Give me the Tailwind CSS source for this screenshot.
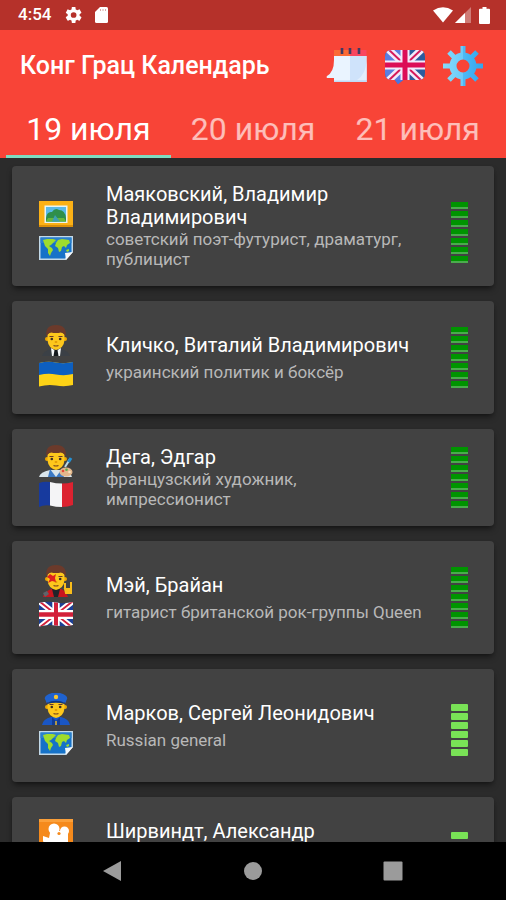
<!DOCTYPE html>
<html lang="ru">
<head>
<meta charset="utf-8">
<meta name="viewport" content="width=device-width, initial-scale=1">
<title>Конг Грац Календарь</title>
<script src="https://cdn.jsdelivr.net/npm/@tailwindcss/browser@4"></script>
</head>
<body class="flex h-screen flex-col overflow-hidden bg-[#303030] font-['Roboto','Noto_Sans',sans-serif] text-white">

<!-- Shared drawings -->
<svg class="hidden" aria-hidden="true">
  <symbol id="map" viewBox="0 0 36 33">
    <path d="M1 5H35V21L28 29H1Z" fill="#c3d9e8"/>
    <path d="M2.500 6.500H33.500V20.500L27 27.500H2.500Z" fill="#1672c8"/>
    <path d="M2.500 6.500H33.500V12H2.500Z" fill="#2a80cc"/>
    <path d="M5 9l4-1 6 0 3 1-3 3-2 2-2 1 3 2 1 2-2 3-1 3-2-3 0-4-3-3-1-3zM18 12l2-3 4-1 7 1 1 3-3 2-1 3-2-2-2 1-1 4-2 1-1-4-3-2zM28 19l3-1 0 2-2 1z" fill="#9fdc2c"/>
    <path d="M28 29L27 22L35 21Z" fill="#f2f7fa"/>
  </symbol>
  <symbol id="uk" viewBox="0 0 60 40" preserveAspectRatio="none">
    <path d="M0 0H60V40H0Z" fill="#1d3f95"/>
    <path d="M0 0L60 40M60 0L0 40" stroke="#fff" stroke-width="9"/>
    <path d="M0 0L30 20M60 40L30 20M60 0L30 20M0 40L30 20" stroke="#d3203a" stroke-width="3"/>
    <path d="M30 0V40M0 20H60" stroke="#fff" stroke-width="13"/>
    <path d="M30 0V40M0 20H60" stroke="#d3203a" stroke-width="7"/>
  </symbol>
  <symbol id="head" viewBox="0 0 36 33">
    <circle cx="9" cy="14" r="2" fill="#eda600"/><circle cx="27" cy="14" r="2" fill="#eda600"/>
    <path d="M9.500 9Q18 3 26.500 9V15Q26 23 18 25Q10 23 9.500 15Z" fill="#fdc71c"/>
    <path d="M8.500 12Q6.500 0 18 0Q29.500 0 27.500 12Q26.500 8 23 7.500Q18 8.500 13 7.500Q9.500 8 8.500 12Z" fill="#6b3a2b"/>
    <path d="M11.500 11.500h4M20.500 11.500h4" stroke="#6b3a2b" stroke-width="1.200"/>
    <circle cx="13.800" cy="14" r="1.300" fill="#3c2b24"/><circle cx="22.200" cy="14" r="1.300" fill="#3c2b24"/>
    <path d="M16.800 17h2.400" stroke="#d98e00" stroke-width="1.400"/>
    <path d="M15.500 20.500Q18 21.500 20.500 20.500" stroke="#7a4a20" stroke-width="1.200" fill="none"/>
  </symbol>
</svg>

<header class="shrink-0 bg-[#f84437]">
  <div class="flex h-[30px] items-center bg-[#b5312a] pr-4 pl-[18px]">
    <span class="text-[17px] font-medium">4:54</span>
    <svg class="ml-[14px] size-[18px]" viewBox="0 0 24 24" fill="#fff" aria-hidden="true"><path fill-rule="evenodd" d="M19.400 13c.1-.3.1-.6.1-1s0-.7-.1-1l2.300-1.800c.2-.2.300-.5.100-.7l-2.200-3.800c-.1-.2-.4-.3-.7-.2l-2.700 1.100c-.6-.4-1.200-.8-1.900-1L13.900 1.700c0-.2-.3-.4-.5-.4H9.600c-.3 0-.5.2-.5.4l-.4 2.900c-.7.300-1.300.600-1.900 1L4.100 4.500c-.2-.1-.5 0-.7.200L1.200 8.500c-.1.200-.1.500.1.700L3.600 11a8 8 0 0 0 0 2l-2.300 1.800c-.2.200-.3.500-.1.700l2.200 3.800c.1.200.4.300.7.200l2.700-1.100c.6.400 1.200.800 1.900 1l.4 2.900c0 .2.200.4.500.4h3.800c.2 0 .5-.2.500-.4l.4-2.900c.7-.3 1.300-.6 1.900-1l2.700 1.100c.2.100.5 0 .7-.2l2.200-3.800c.1-.2.1-.5-.1-.7zM11.500 15.800a3.800 3.800 0 1 1 0-7.600 3.800 3.800 0 0 1 0 7.600z"/></svg>
    <svg class="ml-3 h-4 w-[13px]" viewBox="0 0 13 16" aria-hidden="true"><path d="M5 0H11.500Q13 0 13 1.500V14.500Q13 16 11.500 16H1.500Q0 16 0 14.500V5Z" fill="#fff"/><path d="M5.500 2v2M8 2v2M10.500 2v2" stroke="#d8a8a5" stroke-width="1"/></svg>
    <div class="ml-auto flex items-center">
      <svg class="h-4 w-5" viewBox="0 0 20 16" aria-hidden="true"><path d="M0 3.500Q10-3 20 3.500L10 15.500Z" fill="#fff"/></svg>
      <svg class="ml-[2px] size-4" viewBox="0 0 16 16" aria-hidden="true"><path d="M16 0V16H0Z" fill="#cf7b76"/><path d="M10 6V16H0Z" fill="#fff"/></svg>
      <svg class="ml-2 h-[17px] w-[11px]" viewBox="0 0 11 17" aria-hidden="true"><path d="M3.500 0h4v1.800H10q1 0 1 1V16q0 1-1 1H1q-1 0-1-1V2.800q0-1 1-1H3.500Z" fill="#fff"/></svg>
    </div>
  </div>

  <div class="flex h-[72px] items-center gap-4 pr-[22px] pl-5">
    <h1 class="mr-auto text-[25px] font-medium whitespace-nowrap">Конг Грац Календарь</h1>
    <button type="button" aria-label="Календарь" class="shrink-0">
      <svg class="size-[42px]" viewBox="0 0 42 42" aria-hidden="true">
        <path d="M8 5H40.500V13H8Z" fill="#f9455f"/><path d="M8 5H24V13H8Z" fill="#fb6a35"/>
        <path d="M8 11H40.500V37H8V33H1Q0 32 1 31Q8 27 8 15Z" fill="#eaf4ff"/>
        <path d="M24 11H40.500V37H24Z" fill="#cfe3fb"/><path d="M40.500 16V35H31Q40 29 40.500 16Z" fill="#e2eefc"/>
        <path d="M8 35.500H40.500V37H8Z" fill="#c0daf5"/>
        <path d="M16 3V9M24 3V9M33 3V9" stroke="#413a63" stroke-width="2.600"/>
      </svg>
    </button>
    <button type="button" aria-label="English" class="shrink-0">
      <svg class="size-[42px]" viewBox="0 0 42 42" aria-hidden="true">
        <clipPath id="bubble"><path d="M8 5H35Q41 5 41 12V28Q41 35 35 35H19L14 39L11 35H8Q1 35 1 28V12Q1 5 8 5Z"/></clipPath>
        <g clip-path="url(#bubble)">
          <path d="M0 0H42V42H0Z" fill="#2c5c9e"/><path d="M0 0H21V42H0Z" fill="#5a7ee0"/>
          <path d="M3 3L39 37M39 3L3 37" stroke="#f3eafa" stroke-width="7"/>
          <path d="M3 3L21 20L39 37M39 3L21 20L3 37" stroke="#d51b5b" stroke-width="2"/>
          <path d="M21 5V35M0 20H42" stroke="#f3eafa" stroke-width="9"/>
          <path d="M21 5V35M0 20H42" stroke="#dc0d56" stroke-width="5"/>
          <path d="M10 35H20V42H10Z" fill="#4a74e0"/>
        </g>
      </svg>
    </button>
    <button type="button" aria-label="Настройки" class="shrink-0">
      <svg class="size-[42px]" viewBox="-21 -21 42 42" aria-hidden="true">
        <defs>
          <linearGradient id="steel" gradientUnits="userSpaceOnUse" x1="-20" x2="20" y1="0" y2="0"><stop offset="0" stop-color="#86dcfb"/><stop offset=".5" stop-color="#6bcaf9"/><stop offset=".5" stop-color="#4fbaf5"/><stop offset="1" stop-color="#2fa5ee"/></linearGradient>
        </defs>
        <g fill="none" stroke="url(#steel)">
          <circle r="10" stroke-width="7"/>
          <path stroke-width="5" d="M.01-12L0-20M.01 12L0 20M-12 .01L-20 0M12 .01L20 0M8-8L14-14M-8-8L-14-14M8 8L14 14M-8 8L-14 14"/>
        </g>
      </svg>
    </button>
  </div>

  <div role="tablist" class="flex h-14 px-[6px] text-[32px] leading-none">
    <button type="button" role="tab" aria-selected="true" class="flex-1 border-b-[3px] border-[#7edcc0] whitespace-nowrap">19 июля</button>
    <button type="button" role="tab" aria-selected="false" class="flex-1 border-b-[3px] border-transparent whitespace-nowrap text-white/65">20 июля</button>
    <button type="button" role="tab" aria-selected="false" class="flex-1 border-b-[3px] border-transparent whitespace-nowrap text-white/65">21 июля</button>
  </div>
</header>

<main class="min-h-0 flex-1 overflow-y-auto bg-[#2b2b2b] px-3 pt-2 [scrollbar-width:none]">
  <ul class="flex flex-col gap-[15px]">
    <li class="flex items-center rounded-[4px] bg-[#424242] py-[17px] pr-[26px] pl-[26px] shadow-md shadow-black/40">
      <div class="flex w-9 shrink-0 flex-col pt-[10px]">
        <svg class="h-[33px] w-9" viewBox="0 0 36 33" role="img" aria-label="Картина"><path d="M1 3H35V29H1Z" fill="#fbb116"/><path d="M1 27H35V29H1Z" fill="#d98f0a"/><path d="M6.500 7.500H29.500V25H6.500Z" fill="#e8f4f4"/><path d="M8 9H28V23.500H8Z" fill="#59b9e8"/><path d="M8 20Q9 13 14 14Q17 9 21 12Q27 12 28 20V23.500H8Z" fill="#2f8f4a"/><path d="M10 20h16l2 3.500H8z" fill="#68b83a"/><path d="M17 17l5 6.500h-8z" fill="#3fa0b0"/></svg>
        <svg class="h-[33px] w-9" role="img" aria-label="Карта мира"><use href="#map"/></svg>
      </div>
      <div class="min-w-0 flex-1 pr-4 pl-8">
        <h2 class="text-[20px] leading-[23px]">Маяковский, Владимир Владимирович</h2>
        <p class="text-[17px] leading-5 text-[#b8b8b8]">советский поэт-футурист, драматург, публицист</p>
      </div>
      <div class="flex w-[17px] shrink-0 flex-col gap-[2px] pt-3" role="img" aria-label="Популярность 7">
        <i class="h-[7px] border-b-2 border-[#4bab4d] bg-[#009400]"></i><i class="h-[7px] border-b-2 border-[#4bab4d] bg-[#009400]"></i><i class="h-[7px] border-b-2 border-[#4bab4d] bg-[#009400]"></i><i class="h-[7px] border-b-2 border-[#4bab4d] bg-[#009400]"></i><i class="h-[7px] border-b-2 border-[#4bab4d] bg-[#009400]"></i><i class="h-[7px] border-b-2 border-[#4bab4d] bg-[#009400]"></i><i class="h-[7px] border-b-2 border-[#4bab4d] bg-[#009400]"></i>
      </div>
    </li>

    <li class="flex min-h-[113px] items-center rounded-[4px] bg-[#424242] pr-[26px] pl-[26px] shadow-md shadow-black/40">
      <div class="flex w-9 shrink-0 flex-col">
        <svg class="h-[33px] w-9" viewBox="0 0 36 33" role="img" aria-label="Политик"><path d="M4 31Q5 26 13 24H23Q31 26 32 31Z" fill="#3b4046"/><path d="M13 23L18 26L23 23L22 31H14Z" fill="#f5f7f8"/><path d="M16.500 25h3l1 6h-5z" fill="#15191d"/><use href="#head" width="36" height="33"/></svg>
        <svg class="h-[33px] w-9" viewBox="0 0 36 33" role="img" aria-label="Украина"><path d="M1 5Q10 3 18 4.500Q27 6 35 4V27Q27 29 18 27.500Q10 26 1 28.500Z" fill="#fdd216"/><path d="M1 5Q10 3 18 4.500Q27 6 35 4V16Q27 18 18 16.500Q10 15 1 17Z" fill="#0d5fc0"/></svg>
      </div>
      <div class="flex min-w-0 flex-1 flex-col gap-[5px] pr-4 pl-8">
        <h2 class="text-[20px] leading-[23px]">Кличко, Виталий Владимирович</h2>
        <p class="text-[17px] leading-5 text-[#b8b8b8]">украинский политик и боксёр</p>
      </div>
      <div class="flex w-[17px] shrink-0 flex-col gap-[2px]" role="img" aria-label="Популярность 7">
        <i class="h-[7px] border-b-2 border-[#4bab4d] bg-[#009400]"></i><i class="h-[7px] border-b-2 border-[#4bab4d] bg-[#009400]"></i><i class="h-[7px] border-b-2 border-[#4bab4d] bg-[#009400]"></i><i class="h-[7px] border-b-2 border-[#4bab4d] bg-[#009400]"></i><i class="h-[7px] border-b-2 border-[#4bab4d] bg-[#009400]"></i><i class="h-[7px] border-b-2 border-[#4bab4d] bg-[#009400]"></i><i class="h-[7px] border-b-2 border-[#4bab4d] bg-[#009400]"></i>
      </div>
    </li>

    <li class="flex min-h-[97px] items-center rounded-[4px] bg-[#424242] pr-[26px] pl-[26px] shadow-md shadow-black/40">
      <div class="flex w-9 shrink-0 flex-col">
        <svg class="h-[33px] w-9" viewBox="0 0 36 33" role="img" aria-label="Художник"><path d="M1 32Q2 27 12 25H24Q33 27 34 32Z" fill="#d9e4ea"/><path d="M12 24L18 32H10Z" fill="#3b79c4"/><path d="M24 24L18 32H26Z" fill="#3b79c4"/><use href="#head" width="36" height="33"/><path d="M27 22L32 14" stroke="#b9d9e8" stroke-width="2"/><path d="M30.500 17L33 13" stroke="#2492d6" stroke-width="3"/><ellipse cx="28" cy="27" rx="6.500" ry="4.500" fill="#e3b78c"/><circle cx="25" cy="26" r="1.300" fill="#e34b3a"/><circle cx="28.500" cy="24.800" r="1.300" fill="#5cab4d"/><circle cx="31.500" cy="27" r="1.300" fill="#f4e4c0"/></svg>
        <svg class="h-[33px] w-9" viewBox="0 0 36 33" role="img" aria-label="Франция"><path d="M1 5Q6 3 12 4V27.500Q6 26.500 1 29Z" fill="#173a9e"/><path d="M12 4Q18 5.500 24 5.500V29Q18 29 12 27.500Z" fill="#f4f4f6"/><path d="M24 5.500Q30 5.500 35 4V27Q30 29 24 29Z" fill="#dc2230"/></svg>
      </div>
      <div class="min-w-0 flex-1 pr-24 pl-8">
        <h2 class="text-[20px] leading-[23px]">Дега, Эдгар</h2>
        <p class="text-[17px] leading-5 text-[#b8b8b8]">французский художник, импрессионист</p>
      </div>
      <div class="flex w-[17px] shrink-0 flex-col gap-[2px]" role="img" aria-label="Популярность 7">
        <i class="h-[7px] border-b-2 border-[#4bab4d] bg-[#009400]"></i><i class="h-[7px] border-b-2 border-[#4bab4d] bg-[#009400]"></i><i class="h-[7px] border-b-2 border-[#4bab4d] bg-[#009400]"></i><i class="h-[7px] border-b-2 border-[#4bab4d] bg-[#009400]"></i><i class="h-[7px] border-b-2 border-[#4bab4d] bg-[#009400]"></i><i class="h-[7px] border-b-2 border-[#4bab4d] bg-[#009400]"></i><i class="h-[7px] border-b-2 border-[#4bab4d] bg-[#009400]"></i>
      </div>
    </li>

    <li class="flex min-h-[113px] items-center rounded-[4px] bg-[#424242] pr-[26px] pl-[26px] shadow-md shadow-black/40">
      <div class="flex w-9 shrink-0 flex-col">
        <svg class="h-[33px] w-9" viewBox="0 0 36 33" role="img" aria-label="Музыкант"><path d="M5 32Q6 27 13 24H23Q28 26 30 32Z" fill="#c9151e"/><path d="M14 24H22L20 32H16Z" fill="#20242a"/><path d="M5 28l4-2 2 3-4 3z" fill="#5e646a"/><use href="#head" width="36" height="33"/><path d="M12 9L15 11L18 9L17 13L18 17L14 16L10 18L12 14L9 12Z" fill="#de2020"/><path d="M27 18V24M33 17V24M27 24H33V28H28Z" stroke="#f9bd1b" stroke-width="2" fill="#f9bd1b"/></svg>
        <svg class="h-[33px] w-9" viewBox="0 0 36 33" role="img" aria-label="Великобритания"><clipPath id="wave"><path d="M1 5Q10 3 18 4.500Q27 6 35 4V27Q27 29 18 27.500Q10 26 1 28.500Z"/></clipPath><g clip-path="url(#wave)"><use href="#uk" x="1" y="3" width="34" height="27"/></g></svg>
      </div>
      <div class="flex min-w-0 flex-1 flex-col gap-[5px] pl-8">
        <h2 class="text-[20px] leading-[23px]">Мэй, Брайан</h2>
        <p class="text-[17px] leading-5 text-[#b8b8b8]">гитарист британской рок-группы Queen</p>
      </div>
      <div class="flex w-[17px] shrink-0 flex-col gap-[2px]" role="img" aria-label="Популярность 7">
        <i class="h-[7px] border-b-2 border-[#4bab4d] bg-[#009400]"></i><i class="h-[7px] border-b-2 border-[#4bab4d] bg-[#009400]"></i><i class="h-[7px] border-b-2 border-[#4bab4d] bg-[#009400]"></i><i class="h-[7px] border-b-2 border-[#4bab4d] bg-[#009400]"></i><i class="h-[7px] border-b-2 border-[#4bab4d] bg-[#009400]"></i><i class="h-[7px] border-b-2 border-[#4bab4d] bg-[#009400]"></i><i class="h-[7px] border-b-2 border-[#4bab4d] bg-[#009400]"></i>
      </div>
    </li>

    <li class="flex min-h-[113px] items-center rounded-[4px] bg-[#424242] pr-[26px] pl-[26px] shadow-md shadow-black/40">
      <div class="flex w-9 shrink-0 flex-col">
        <svg class="h-[33px] w-9" viewBox="0 0 36 33" role="img" aria-label="Военный"><path d="M4 32Q5 26 13 24H23Q31 26 32 32Z" fill="#1a56c4"/><path d="M14 24L18 28L22 24V32H14Z" fill="#123c96"/><path d="M18 28V32" stroke="#e5b62d" stroke-width="1.500"/><use href="#head" width="36" height="33"/><path d="M7.500 7Q5 4 11 1Q18-2 25 1Q31 4 28.500 7L27.500 10Q18 7 8.500 10Z" fill="#1f62cf"/><path d="M8.500 10Q18 5.500 27.500 10L26.500 11Q18 8.500 9.500 11Z" fill="#11357d"/><circle cx="18" cy="4" r="2.200" fill="#f7c52f"/></svg>
        <svg class="h-[33px] w-9" role="img" aria-label="Карта мира"><use href="#map"/></svg>
      </div>
      <div class="flex min-w-0 flex-1 flex-col gap-[5px] pr-4 pl-8">
        <h2 class="text-[20px] leading-[23px]">Марков, Сергей Леонидович</h2>
        <p class="text-[17px] leading-5 text-[#b8b8b8]">Russian general</p>
      </div>
      <div class="flex h-[61px] w-[17px] shrink-0 flex-col justify-end gap-[2px]" role="img" aria-label="Популярность 6">
        <i class="h-[7px] rounded-[1px] bg-[#79e256]"></i><i class="h-[7px] rounded-[1px] bg-[#79e256]"></i><i class="h-[7px] rounded-[1px] bg-[#79e256]"></i><i class="h-[7px] rounded-[1px] bg-[#79e256]"></i><i class="h-[7px] rounded-[1px] bg-[#79e256]"></i><i class="h-[7px] rounded-[1px] bg-[#79e256]"></i>
      </div>
    </li>

    <li class="flex min-h-[113px] items-start rounded-[4px] bg-[#424242] pt-5 pr-[26px] pl-[26px] shadow-md shadow-black/40">
      <svg class="h-[33px] w-9 shrink-0" viewBox="0 0 36 33" role="img" aria-label="Кино"><path d="M1 2H35V33H1Z" fill="#f58a1c"/><path d="M1 2H35V5H1Z" fill="#fba03a"/><circle cx="16" cy="12" r="5.500" fill="#fff"/><circle cx="26.500" cy="14" r="4.500" fill="#fff"/><path d="M16 14H30V33H9L5 24V19L11 21L12 16Z" fill="#fff"/><circle cx="21" cy="16.500" r="1.600" fill="#f58a1c"/></svg>
      <div class="min-w-0 flex-1 pt-[3px] pr-4 pl-8">
        <h2 class="text-[20px] leading-[23px]">Ширвиндт, Александр</h2>
      </div>
      <div class="flex w-[17px] shrink-0 flex-col gap-[2px] pt-[15px]" role="img" aria-label="Популярность">
        <i class="h-[7px] rounded-[1px] bg-[#79e256]"></i>
      </div>
    </li>
  </ul>
</main>

<nav class="flex h-[58px] shrink-0 items-center justify-center gap-[120px] bg-black" aria-label="Система">
  <button type="button" aria-label="Назад"><svg class="size-5" viewBox="0 0 20 20" aria-hidden="true"><path d="M0 10L18 0V20Z" fill="#9b9b9b"/></svg></button>
  <button type="button" aria-label="Домой"><svg class="size-5" viewBox="0 0 20 20" aria-hidden="true"><circle cx="10" cy="10" r="9" fill="#9b9b9b"/></svg></button>
  <button type="button" aria-label="Недавние"><svg class="size-5" viewBox="0 0 20 20" aria-hidden="true"><rect x=".5" y=".5" width="19" height="19" rx="1" fill="#9b9b9b"/></svg></button>
</nav>
</body>
</html>
